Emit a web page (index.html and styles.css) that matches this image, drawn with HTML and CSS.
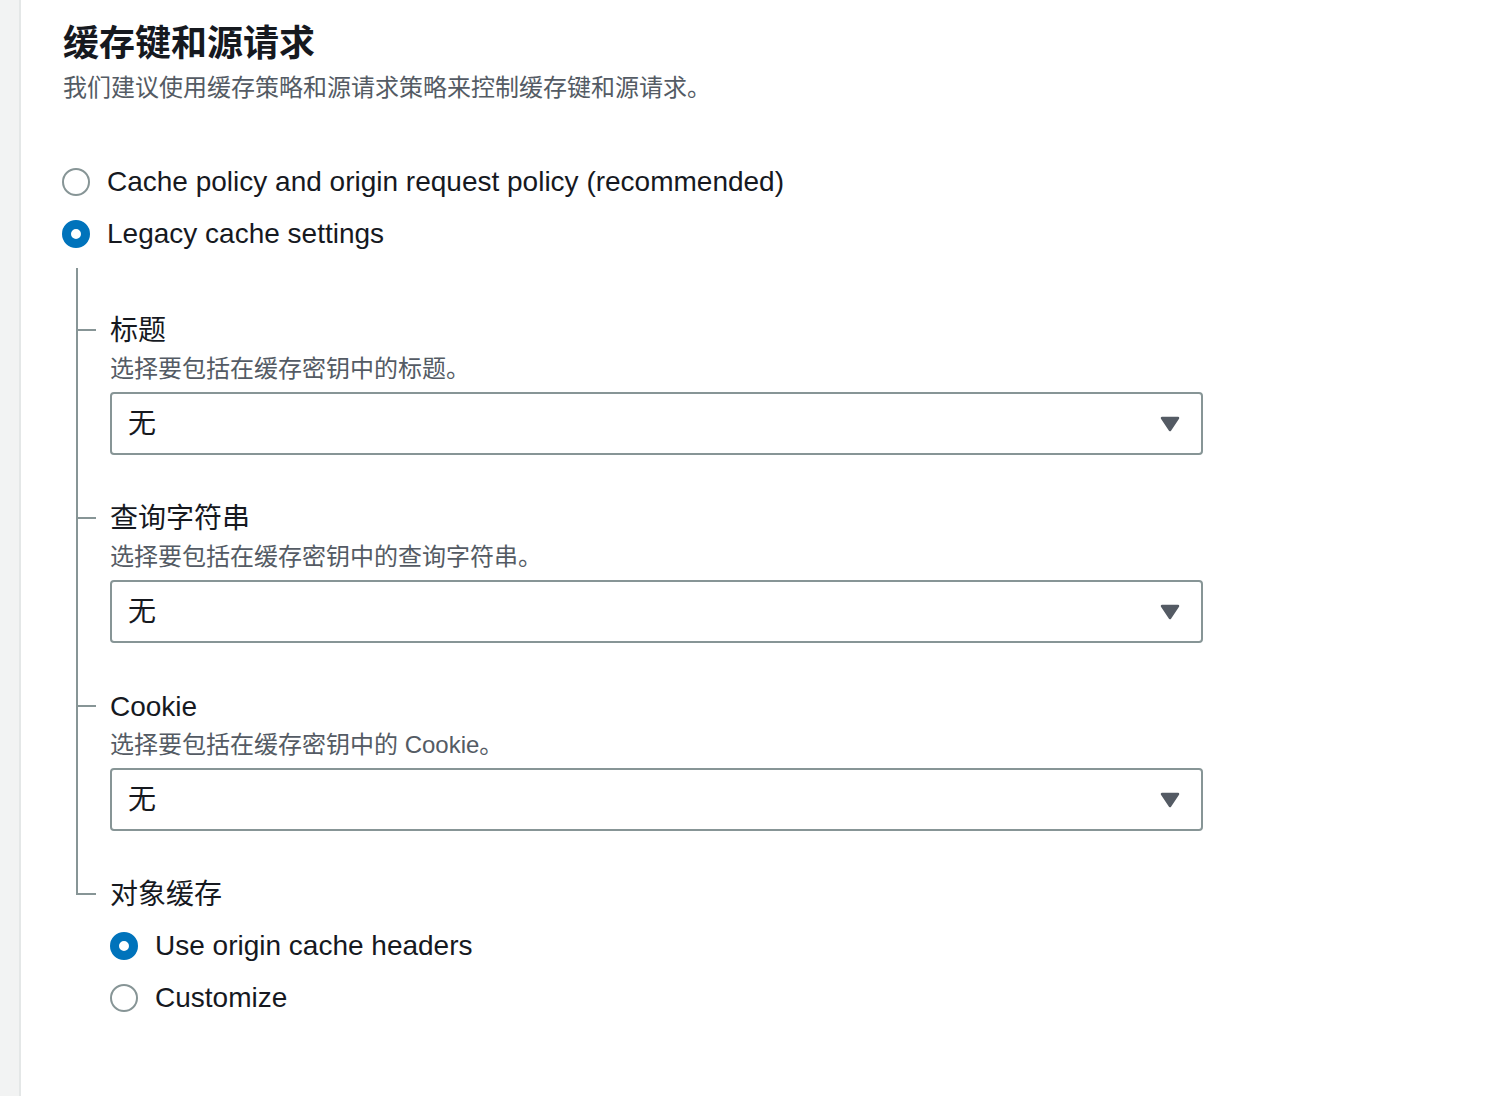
FILE: index.html
```html
<!DOCTYPE html>
<html lang="zh">
<head>
<meta charset="utf-8">
<title>缓存键和源请求</title>
<link rel="stylesheet" href="styles.css">
</head>
<body>
<div class="page">
  <aside class="sidebar"></aside>
  <main class="main">
    <h2 class="heading">缓存键和源请求</h2>
    <p class="desc">我们建议使用缓存策略和源请求策略来控制缓存键和源请求。</p>

    <div class="radio-group top-radios">
      <label class="radio-row"><span class="radio"></span><span class="radio-label">Cache policy and origin request policy (recommended)</span></label>
      <label class="radio-row"><span class="radio checked"></span><span class="radio-label">Legacy cache settings</span></label>
    </div>

    <div class="tree">
      <div class="tree-item first">
        <div class="field-label">标题</div>
        <div class="field-desc">选择要包括在缓存密钥中的标题。</div>
        <div class="select"><span class="select-value">无</span>
          <svg class="caret" width="20" height="16" viewBox="0 0 20 16"><path d="M2 2 L18 2 L10 14 Z" fill="#545b64" stroke="#545b64" stroke-width="2.5" stroke-linejoin="round"/></svg>
        </div>
      </div>
      <div class="tree-item">
        <div class="field-label">查询字符串</div>
        <div class="field-desc">选择要包括在缓存密钥中的查询字符串。</div>
        <div class="select"><span class="select-value">无</span>
          <svg class="caret" width="20" height="16" viewBox="0 0 20 16"><path d="M2 2 L18 2 L10 14 Z" fill="#545b64" stroke="#545b64" stroke-width="2.5" stroke-linejoin="round"/></svg>
        </div>
      </div>
      <div class="tree-item">
        <div class="field-label">Cookie</div>
        <div class="field-desc">选择要包括在缓存密钥中的 Cookie。</div>
        <div class="select"><span class="select-value">无</span>
          <svg class="caret" width="20" height="16" viewBox="0 0 20 16"><path d="M2 2 L18 2 L10 14 Z" fill="#545b64" stroke="#545b64" stroke-width="2.5" stroke-linejoin="round"/></svg>
        </div>
      </div>
      <div class="tree-item last">
        <div class="field-label">对象缓存</div>
        <div class="radio-group inner-radios">
          <label class="radio-row"><span class="radio checked"></span><span class="radio-label">Use origin cache headers</span></label>
          <label class="radio-row"><span class="radio"></span><span class="radio-label">Customize</span></label>
        </div>
      </div>
    </div>
  </main>
</div>
</body>
</html>
```

FILE: styles.css
```css
* { box-sizing: border-box; }
html, body {
  margin: 0;
  padding: 0;
  background: #ffffff;
  font-family: "Liberation Sans", "Noto Sans CJK SC", sans-serif;
  color: #16191f;
}
.page {
  display: flex;
  min-height: 1096px;
}
.sidebar {
  width: 21px;
  flex: 0 0 21px;
  background: #f2f3f3;
  border-right: 2px solid #e4e7e7;
}
.main {
  flex: 1;
  padding: 22px 0 0 42px;
}
.heading {
  margin: 0;
  font-size: 36px;
  line-height: 44px;
  font-weight: 700;
  color: #16191f;
}
.desc {
  margin: 6px 0 0;
  font-size: 24px;
  line-height: 32px;
  color: #545b64;
}
.radio-group {
  display: flex;
  flex-direction: column;
}
.top-radios { margin-top: 52px; }
.radio-row {
  display: flex;
  align-items: center;
  height: 52px;
  gap: 17px;
  cursor: pointer;
}
.top-radios .radio-row { margin-left: -1px; }
.radio {
  width: 28px;
  height: 28px;
  flex: 0 0 28px;
  border-radius: 50%;
  border: 2px solid #879596;
  background: #fff;
}
.radio.checked {
  border: 9px solid #0073bb;
}
.radio-label {
  font-size: 28px;
  line-height: 36px;
  color: #16191f;
}
.tree {
  margin: 8px 0 0 13px;
  display: flex;
  flex-direction: column;
}
.tree-item {
  position: relative;
  padding: 0 0 44px 32px;
  border-left: 2px solid #879596;
}
.tree-item.first { padding-top: 43px; }
.tree-item.last {
  border-left: 2px solid transparent;
  padding-bottom: 0;
}
.tree-item::before {
  content: "";
  position: absolute;
  left: -2px;
  width: 20px;
  height: 2px;
  background: #879596;
  top: 61px;
}
.tree-item:not(.first)::before { top: 18px; }
.tree-item.last::after {
  content: "";
  position: absolute;
  left: -2px;
  top: 0;
  width: 2px;
  height: 20px;
  background: #879596;
}
.field-label {
  padding-top: 2px;
  font-size: 28px;
  line-height: 36px;
  color: #16191f;
}
.field-desc {
  margin-top: 4px;
  font-size: 24px;
  line-height: 32px;
  color: #545b64;
}
.select {
  margin-top: 7px;
  width: 1093px;
  height: 63px;
  border: 2px solid #879596;
  border-radius: 4px;
  display: flex;
  align-items: center;
  justify-content: space-between;
  padding: 0 21px 0 16px;
  background: #fff;
}
.select-value {
  font-size: 28px;
  line-height: 36px;
  color: #16191f;
}
.caret { display: block; margin-top: 1px; }
.inner-radios { margin-top: 7px; }
```
